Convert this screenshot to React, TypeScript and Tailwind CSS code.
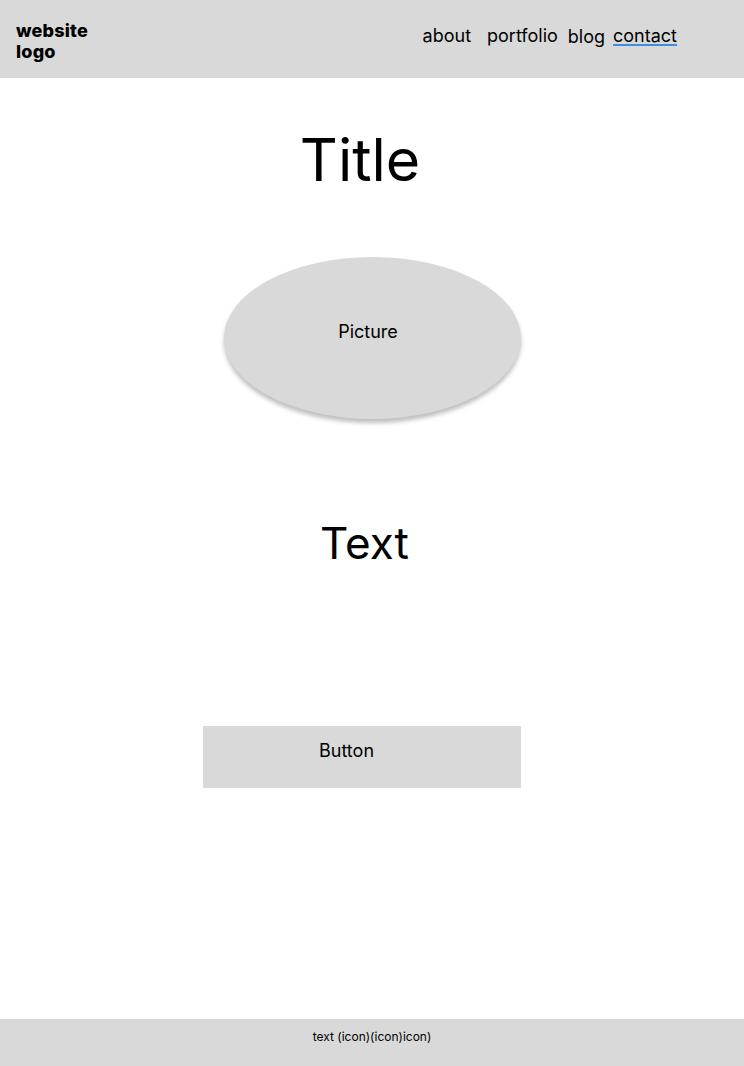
export default function App() {
  const font = { fontFamily: "Inter, 'Noto Sans', sans-serif" }
  return (
    <div className="w-[744px] h-[1066px] flex flex-col bg-white text-black" style={font}>
      <header className="h-[78px] shrink-0 bg-[#d9d9d9] flex items-start">
        <div className="pl-4 pt-[20px] text-[18px] leading-[21px] font-extrabold tracking-[0.2px]">
          website
          <br />
          logo
        </div>
        <nav className="ml-auto mr-[67px] pt-[25px] flex text-[18px] leading-[22px]">
          <span>about</span>
          <span className="ml-[16px]">portfolio</span>
          <span className="ml-[10px] mt-[1px]">blog</span>
          <span className="ml-[8px] underline decoration-[#3b8fe0] decoration-2 underline-offset-[2px]">
            contact
          </span>
        </nav>
      </header>

      <main className="flex-1 flex flex-col items-center">
        <h1 className="mt-[52px] pr-[24px] text-[59px] leading-none font-normal">Title</h1>

        <div className="mt-[68px] w-[297px] h-[162px] rounded-[50%] bg-[#d9d9d9] shadow-[0_4px_4px_rgba(0,0,0,0.25)] flex items-start justify-center pt-[64px] pr-[8px]">
          <span className="text-[18px] leading-[22px]">Picture</span>
        </div>

        <div className="mt-[102px] pr-[15px] text-[44px] leading-none">Text</div>

        <button className="mt-[161px] mr-[20px] w-[318px] h-[62px] bg-[#d9d9d9] flex items-center pl-[116px] pb-[12px] text-[18px] leading-[22px]">
          Button
        </button>
      </main>

      <footer className="h-[47px] shrink-0 bg-[#d9d9d9] flex justify-center pt-[10px]">
        <span className="text-[12px] leading-[16px]">text (icon)(icon)icon)</span>
      </footer>
    </div>
  )
}
